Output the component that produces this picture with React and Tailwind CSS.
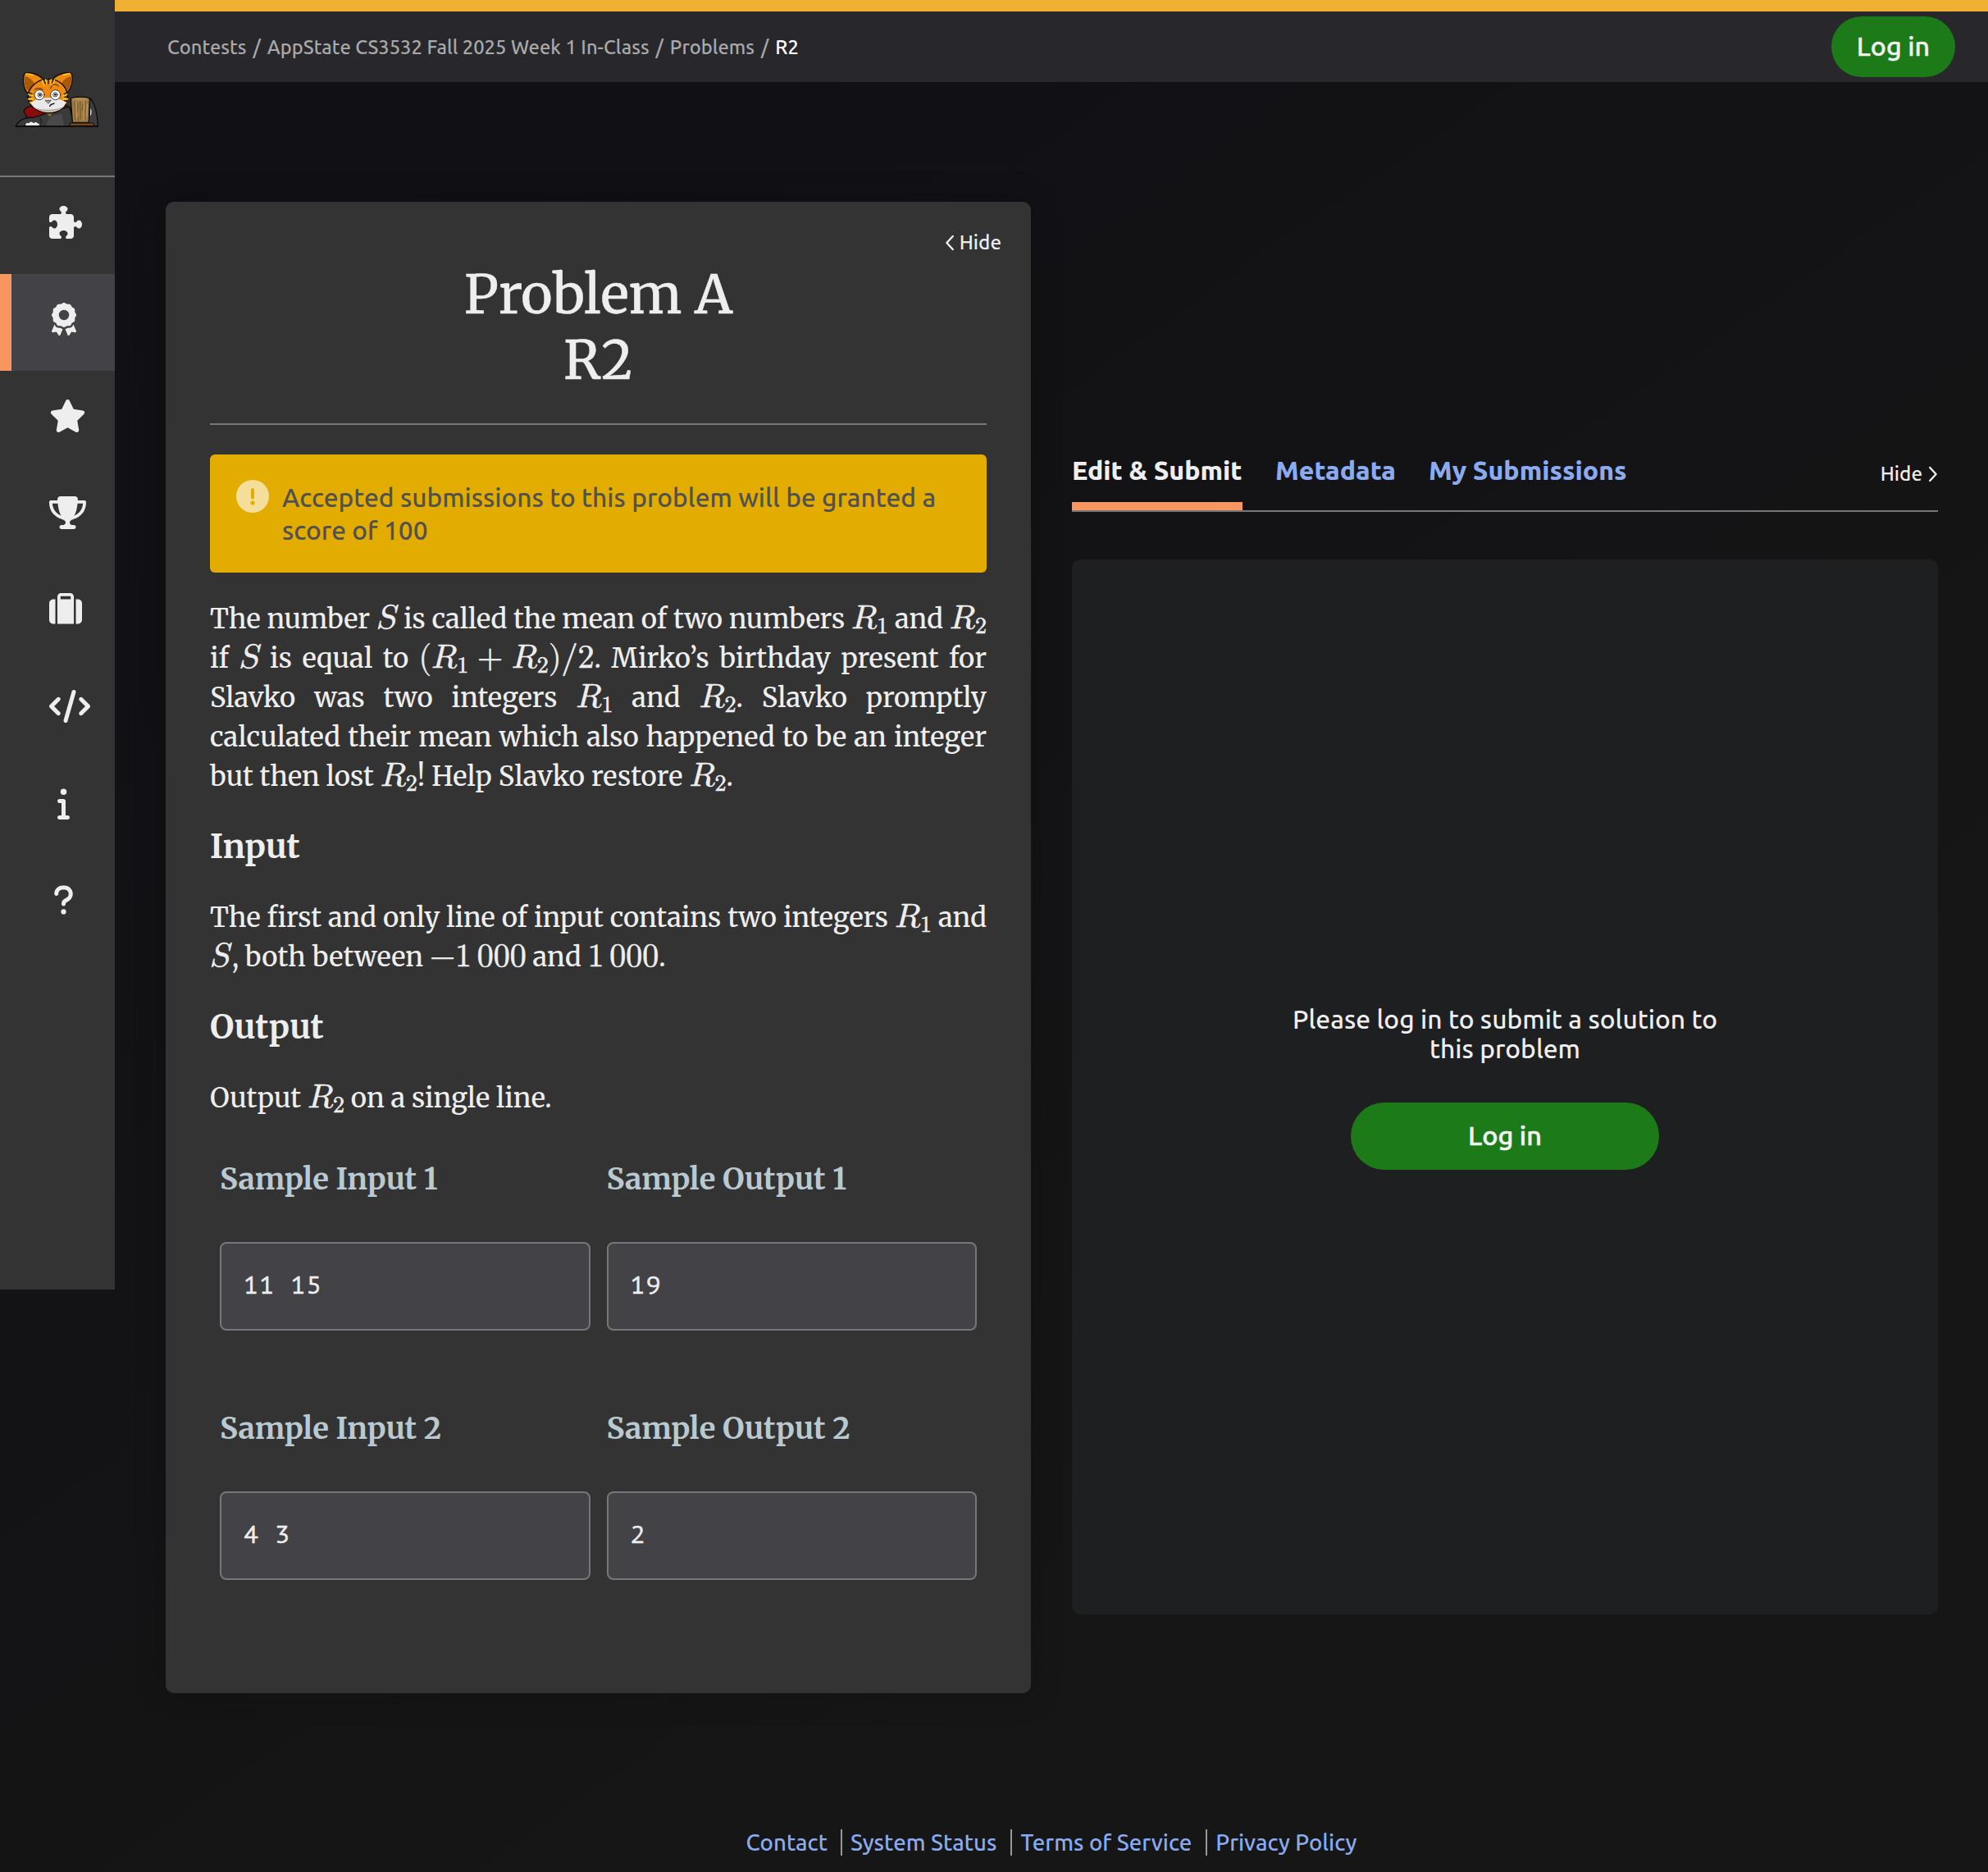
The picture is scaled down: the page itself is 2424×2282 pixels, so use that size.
import {
  FaPuzzlePiece,
  FaAward,
  FaStar,
  FaTrophy,
  FaSuitcase,
  FaCode,
  FaInfo,
  FaQuestion,
} from "react-icons/fa6";

const NAV = [
  { icon: FaPuzzlePiece, size: "h-[40px] w-[40px]" },
  { icon: FaAward, size: "h-[40px] w-[30px]", active: true },
  { icon: FaStar, size: "h-[40px] w-[45px]" },
  { icon: FaTrophy, size: "h-[40px] w-[45px]" },
  { icon: FaSuitcase, size: "h-[40px] w-[40px]" },
  { icon: FaCode, size: "h-[40px] w-[50px]" },
  { icon: FaInfo, size: "h-[40px] w-[15px]" },
  { icon: FaQuestion, size: "h-[40px] w-[25px]" },
];

function Mascot() {
  return (
    <svg viewBox="0 0 330 240" className="block h-[80px] w-[110px]" strokeLinejoin="round" strokeLinecap="round">
      <path d="M42 168 C48 150 62 146 82 150 L188 146 C205 144 214 152 216 170 L200 200 L60 200 Z" fill="#8a0b0b" stroke="#0c0c0c" strokeWidth="4" />
      <path d="M282 118 C298 128 312 170 313 222 L262 222 Z" fill="#3d3d3d" stroke="#0c0c0c" strokeWidth="4" />
      <path d="M286 156 C291 162 291 178 285 184 Z" fill="#e8e8e8" />
      <path d="M14 222 C20 200 46 188 76 190 C104 184 124 172 140 170 C168 168 188 150 210 152 L226 222 Z" fill="#3a3a3a" stroke="#0c0c0c" strokeWidth="4" />
      <path d="M140 184 L180 176 L190 220 L122 220 Z" fill="#4a4a4a" />
      <path d="M100 190 C112 204 104 216 96 220" fill="none" stroke="#151515" strokeWidth="3" />
      <path d="M124 174 L150 174 L137 188 Z" fill="#8a6d3b" stroke="#1a1a1a" strokeWidth="2" />
      <path d="M62 106 C38 88 36 44 46 28 C60 22 96 30 112 50 Z" fill="#ee8a12" stroke="#0c0c0c" strokeWidth="4" />
      <path d="M62 98 C44 82 42 56 44 40 C60 42 74 52 80 66 Z" fill="#a8590c" />
      <path d="M192 106 C220 88 224 44 216 28 C200 22 164 30 148 50 Z" fill="#ee8a12" stroke="#0c0c0c" strokeWidth="4" />
      <path d="M196 98 C216 82 218 56 216 40 C200 42 186 52 180 66 Z" fill="#a8590c" />
      <path d="M50 30 L74 34 M186 34 L210 29" stroke="#f7c32a" strokeWidth="5" />
      <path d="M132 49 C172 49 200 76 202 112 C203 150 170 173 134 173 C96 173 58 150 58 114 C58 78 92 49 132 49 Z" fill="#ee8a12" stroke="#0c0c0c" strokeWidth="4" />
      <path d="M110 54 L116 72 M122 51 L125 68 M143 51 L140 68 M154 53 L148 70" stroke="#f7c32a" strokeWidth="5" />
      <path d="M116 53 L121 66 M132 50 L132 66 M149 52 L145 64" stroke="#111" strokeWidth="4" />
      <path d="M60 104 L76 110 M60 122 L76 122 M66 136 L80 132 M200 104 L186 110 M202 122 L186 122 M196 136 L182 132" stroke="#f7c32a" strokeWidth="6" />
      <path d="M56 98 L72 104 M54 114 L68 115 M60 130 L72 128 M204 98 L190 104 M206 114 L192 115 M200 130 L190 128" stroke="#111" strokeWidth="4" />
      <path d="M68 138 C80 124 108 116 131 118 C156 116 184 124 196 136 C188 160 162 170 134 170 C104 170 80 158 68 138 Z" fill="#e9e9e9" />
      <path d="M76 150 C96 174 170 174 190 148 C170 164 100 166 76 150 Z" fill="#b5aeb0" />
      <circle cx="99" cy="107" r="18" fill="#fff" stroke="#1a1a1a" strokeWidth="2.5" />
      <circle cx="158" cy="107" r="18" fill="#fff" stroke="#1a1a1a" strokeWidth="2.5" />
      <circle cx="101" cy="107" r="8" fill="#fff" stroke="#222" strokeWidth="2.5" />
      <circle cx="157" cy="106" r="8" fill="#fff" stroke="#222" strokeWidth="2.5" />
      <circle cx="101" cy="107" r="4" fill="#111" />
      <circle cx="157" cy="106" r="4" fill="#111" />
      <path d="M82 88 C90 80 104 82 112 88" fill="none" stroke="#2a1804" strokeWidth="3" />
      <path d="M140 84 C144 66 160 64 170 76" fill="none" stroke="#2a1804" strokeWidth="3" />
      <path d="M121 127 L142 127 L132 138 Z" fill="#b39486" stroke="#222" strokeWidth="2" />
      <path d="M137 148 C142 138 148 142 153 138" fill="none" stroke="#111" strokeWidth="4" />
      <path d="M214 122 C216 112 280 112 283 122 L280 208 L220 208 Z" fill="#a07c44" stroke="#0c0c0c" strokeWidth="4" />
      <path d="M219 124 C234 116 264 116 279 124 C262 130 236 130 219 124 Z" fill="#b08c50" />
      <path d="M228 132 L230 198 M240 136 L238 168 M248 132 L250 196 M258 140 L256 164 M268 132 L266 198 M242 186 L242 204" stroke="#5e451e" strokeWidth="2" />
      <path d="M234 134 L235 190 M262 134 L262 196 M274 140 L272 186" stroke="#c2a062" strokeWidth="3" />
      <path d="M213 210 L296 210 L300 220 L210 220 Z" fill="#7a4a1c" stroke="#0c0c0c" strokeWidth="3" />
      <path d="M48 219 C46 210 54 206 60 210 C64 203 74 203 78 210 C82 204 92 205 93 211 C100 209 102 216 98 219 Z" fill="#f2f2f2" stroke="#222" strokeWidth="2" />
      <path d="M13 222 H314" stroke="#0c0c0c" strokeWidth="4" />
    </svg>
  );
}

function Chevron({ flip }) {
  return (
    <svg viewBox="0 0 12 20" className={flip ? "h-[20px] w-[12px] rotate-180" : "h-[20px] w-[12px]"} fill="none" stroke="#eee" strokeWidth="2.4" strokeLinecap="round" strokeLinejoin="round">
      <path d="M9.8 2 L2.4 10 L9.8 18" />
    </svg>
  );
}

/* Upright math text: digits, parentheses, operators. */
function M({ children }) {
  return <span className="whitespace-nowrap font-['Latin_Modern_Math','Latin_Modern_Roman','Liberation_Serif',serif] text-[40px] leading-[0] tracking-normal [-webkit-text-stroke:0.6px_#eee]">{children}</span>;
}

/* Math variable with an optional subscript. */
function V({ n = "R", sub }) {
  return (
    <span className="whitespace-nowrap font-['Latin_Modern_Math','Latin_Modern_Roman','Liberation_Serif',serif] text-[41px] leading-[0] tracking-normal [-webkit-text-stroke:0.6px_#eee]">
      {n === "R" ? "𝑅" : "𝑆"}
      {sub && <span className="relative top-[6px] text-[28px]">{sub}</span>}
    </span>
  );
}

function Line({ children, last, tight }) {
  const align = last ? "" : "[text-align-last:justify]";
  const spacing = tight ? "tracking-[-0.13px]" : "";
  return <div className={`h-[48px] whitespace-nowrap ${align} ${spacing}`}>{children}</div>;
}

function Sample({ title, text }) {
  return (
    <div className="flex flex-1 flex-col">
      <h3 className="h-[44px] text-[36.4px] font-bold leading-[45px] text-[#b9c9cf]">{title}</h3>
      <pre className="mt-[55px] flex h-[108px] items-center rounded-[8px] border-2 border-[#777] bg-[#434247] px-[27px] pt-[1px] font-['PT_Mono','Liberation_Mono',monospace] text-[29.5px] tracking-[1.5px] text-[#eee] [-webkit-text-stroke:0.6px_#eee]">{text}</pre>
    </div>
  );
}

export default function App() {
  return (
    <div className="flex h-[2282px] w-[2424px] items-start bg-[linear-gradient(145deg,#101015_10%,#161616_75%)] font-[Ubuntu,'Noto_Sans',sans-serif] text-[#eee]">
      <aside className="h-[1572px] w-[140px] shrink-0 bg-[#333]">
        <div className="h-[216px] border-b-2 border-[#777] pl-[15px] pt-[80px]">
          <Mascot />
        </div>
        <nav>
          {NAV.map(({ icon: Icon, size, active }, i) => (
            <div key={i} className={active ? "flex h-[118px] border-l-[14px] border-[#f7965f] bg-[#434247] pl-[46px] pt-[35px]" : "flex h-[118px] pl-[60px] pt-[35px]"}>
              <span className="flex h-[40px] min-w-[35px] items-center justify-center">
                <Icon className={size} />
              </span>
            </div>
          ))}
        </nav>
      </aside>

      <div className="flex h-full flex-1 flex-col">
        <header className="flex h-[100px] items-center justify-between border-t-[14px] border-[#f0b034] bg-[#28282c] pl-[64px] pr-[40px]">
          <div className="flex gap-[8px] pt-[2px] text-[23.75px] font-medium text-[#a9a9a9]">
            <span>Contests</span>
            <span>/</span>
            <span>AppState CS3532 Fall 2025 Week 1 In-Class</span>
            <span>/</span>
            <span>Problems</span>
            <span>/</span>
            <span className="text-white">R2</span>
          </div>
          <button className="h-[74px] w-[151px] rounded-full bg-[#1c7a18] pb-[2px] text-[32.3px] font-medium text-[#f2f2f2] [-webkit-text-stroke:0.4px_#f2f2f2]">Log in</button>
        </header>

        <main className="flex items-start pl-[62px] pt-[146px]">
          <section className="h-[1818px] w-[1055px] rounded-[10px] bg-[#333] pt-[35px] font-[Merriweather,'Noto_Serif','DejaVu_Serif_Condensed',serif] shadow-[0_0_40px_rgba(0,0,0,0.2)]">
            <div className="flex h-[38px] items-start justify-end gap-[6px] pr-[36px] font-[Ubuntu,'Noto_Sans',sans-serif] text-[24.2px] font-medium leading-[28px]">
              <span className="pt-[5px]"><Chevron /></span>
              <span>Hide</span>
            </div>
            <div className="px-[54px]">
              <h1 className="text-center text-[65.5px] leading-[80px] [-webkit-text-stroke:0.4px_#eee]">Problem A<br />R2</h1>
              <hr className="mt-[37px] border-0 border-t-2 border-[#777]" />
              <div className="mt-[36px] flex h-[144px] gap-[16px] rounded-[6px] bg-[#e2ac00] pl-[32px] pt-[32px] font-[Ubuntu,'Noto_Sans',sans-serif] text-[31.7px] font-medium leading-[40px] text-[#515151]">
                <svg viewBox="0 0 40 40" className="-mt-px h-[40px] w-[40px]">
                  <circle cx="20" cy="20" r="20" fill="#f4de99" />
                  <path d="M20 12 V21.5" stroke="#e2ac00" strokeWidth="4" strokeLinecap="round" />
                  <circle cx="20" cy="28" r="2.6" fill="#e2ac00" />
                </svg>
                <p>Accepted submissions to this problem will be granted a<br />score of 100</p>
              </div>

              <div className="mt-[33px] text-[32.8px] font-medium leading-[48px]">
                <Line tight>The number <V n="S" /> is called the mean of two numbers <V sub="1" /> and <V sub="2" /></Line>
                <Line>if <V n="S" /> is equal to <M>(</M><V sub="1" /><M>&#8202;&#8198;+&#8202;&#8198;</M><V sub="2" /><M>)/2</M>. Mirko’s birthday present for</Line>
                <Line>Slavko was two integers <V sub="1" /> and <V sub="2" />. Slavko promptly</Line>
                <Line>calculated their mean which also happened to be an integer</Line>
                <Line last>but then lost <V sub="2" />! <span className="tracking-[0.18px]">Help Slavko restore </span><V sub="2" />.</Line>
                <h2 className="mb-[39px] mt-[37px] text-[40.4px] font-bold leading-[48px]">Input</h2>
                <Line tight>The first and only line of input contains two integers <V sub="1" /> and</Line>
                <Line last><V n="S" /><span className="pl-[1.5px]">, both between </span><M>−1&#8198;000</M> and <M>1&#8198;000</M>.</Line>
                <h2 className="mb-[39px] mt-[37px] text-[40.2px] font-bold leading-[48px]">Output</h2>
                <Line last>Output <V sub="2" /> on a single line.</Line>
              </div>

              <div className="mt-[52px] flex gap-[20px] px-[12px]">
                <Sample title="Sample Input 1" text="11 15" />
                <Sample title="Sample Output 1" text="19" />
              </div>
              <div className="mt-[97px] flex gap-[20px] px-[12px]">
                <Sample title="Sample Input 2" text="4 3" />
                <Sample title="Sample Output 2" text="2" />
              </div>
            </div>
          </section>

          <section className="ml-[50px] mt-[306px] w-[1056px]">
            <div className="flex h-[72px] border-b-2 border-[#777] text-[32px] font-extrabold leading-[43px]">
              <div className="flex h-[70px] w-[208px] items-start border-b-[10px] border-[#f7965f]">Edit &amp; Submit</div>
              <div className="ml-[40px] text-[#8aabf0]">Metadata</div>
              <div className="ml-[40px] text-[#8aabf0]">My Submissions</div>
              <div className="ml-auto flex gap-[7px] pt-[11px] text-[24.2px] font-medium leading-[28px]">
                <span>Hide</span>
                <span className="pt-[5px]"><Chevron flip /></span>
              </div>
            </div>
            <div className="mt-[58px] flex h-[1286px] flex-col items-center rounded-[10px] bg-[#1e1f21] text-center">
              <p className="mt-[542px] text-[31.75px] font-medium leading-[36px]">Please log in to submit a solution to<br />this problem</p>
              <button className="mt-[48px] h-[82px] w-[376px] rounded-full bg-[#1c7a18] pb-[2px] text-[32.5px] font-medium text-[#f2f2f2] [-webkit-text-stroke:0.6px_#f2f2f2]">Log in</button>
            </div>
          </section>
        </main>

        <footer className="mt-auto flex h-[52px] justify-center text-[27.65px] font-medium leading-[32px] text-[#8aabf0]">
          <a>Contact</a>
          <a className="ml-[16px] h-[32px] border-l-2 border-[#999] pl-[10px]">System Status</a>
          <a className="ml-[17px] h-[32px] border-l-2 border-[#999] pl-[10px]">Terms of Service</a>
          <a className="ml-[17px] h-[32px] border-l-2 border-[#999] pl-[10px]">Privacy Policy</a>
        </footer>
      </div>
    </div>
  );
}
